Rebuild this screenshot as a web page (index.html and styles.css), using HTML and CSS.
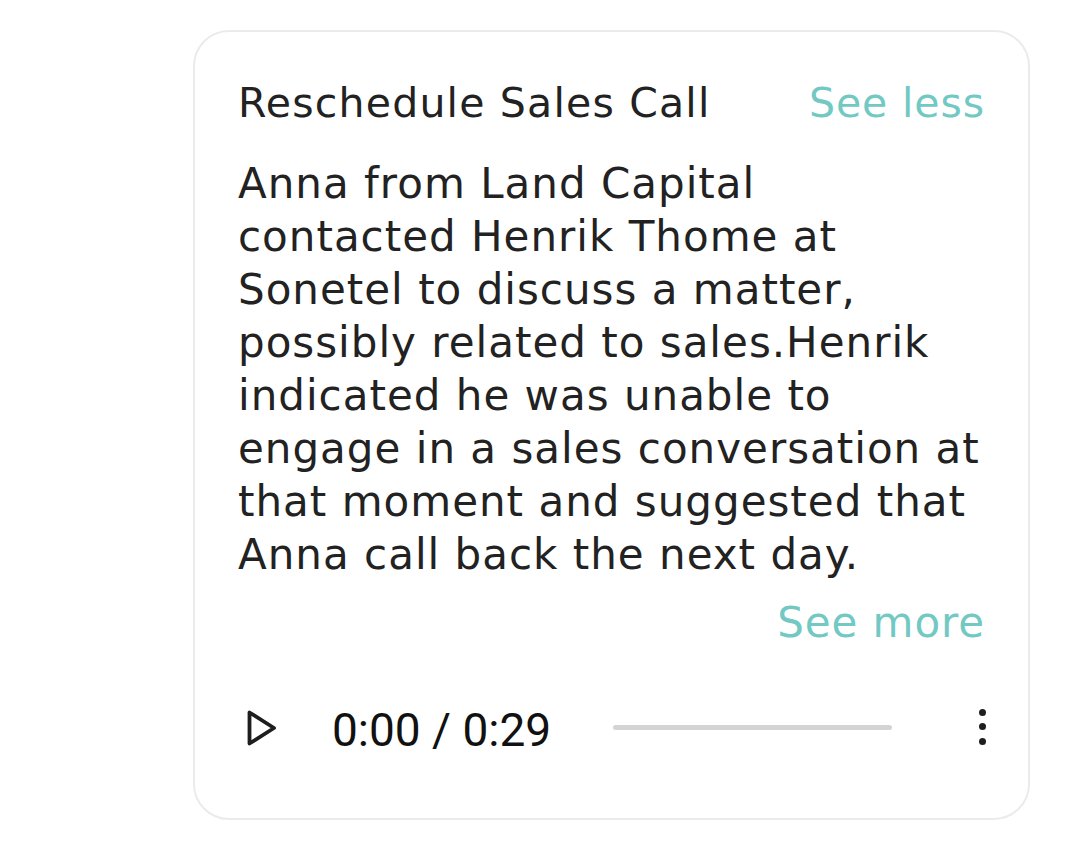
FILE: index.html
```html
<!DOCTYPE html>
<html lang="en">
<head>
<meta charset="utf-8">
<title>Reschedule Sales Call</title>
<link rel="stylesheet" href="styles.css">
</head>
<body>
<div class="card">
  <div class="card-header">
    <h2 class="title">Reschedule Sales Call</h2>
    <a class="link" href="#">See less</a>
  </div>
  <p class="summary">Anna from Land Capital contacted Henrik Thome at Sonetel to discuss a matter, possibly related to sales.Henrik indicated he was unable to engage in a sales conversation at that moment and suggested that Anna call back the next day.</p>
  <div class="more-row">
    <a class="link" href="#">See more</a>
  </div>
  <div class="player">
    <button class="play" aria-label="Play">
      <svg width="32" height="38" viewBox="0 0 32 38"><path d="M3.5 3.5 L3.5 34.5 L28 19 Z" fill="none" stroke="#1e1e1e" stroke-width="3.8" stroke-linejoin="round"/></svg>
    </button>
    <span class="time">0:00 / 0:29</span>
    <div class="track"></div>
    <div class="menu" aria-label="More options">
      <span class="dot"></span><span class="dot"></span><span class="dot"></span>
    </div>
  </div>
</div>
</body>
</html>
```
FILE: styles.css
```css
html, body {
  margin: 0;
  padding: 0;
  background: #ffffff;
}
body {
  padding: 30px 50px 0 193px;
  font-family: "DejaVu Sans", sans-serif;
  color: #222222;
}
.card {
  width: 747px;
  border: 2px solid #ebebeb;
  border-radius: 36px;
  padding: 46px 43px 58px 43px;
}
.card-header {
  display: flex;
  justify-content: space-between;
  align-items: baseline;
}
.title {
  margin: 0;
  font-size: 41px;
  line-height: 50px;
  font-weight: normal;
  letter-spacing: 1.2px;
  color: #222222;
}
.link {
  font-size: 41px;
  line-height: 50px;
  letter-spacing: 0.9px;
  color: #72c9c4;
  text-decoration: none;
}
.summary {
  margin: 29px 0 0 0;
  width: 744px;
  font-size: 42px;
  line-height: 53px;
  letter-spacing: 1px;
  color: #222222;
}
.more-row {
  display: flex;
  justify-content: flex-end;
  margin-top: 15px;
}
.more-row .link {
  font-size: 42px;
  line-height: 53px;
}
.player {
  display: flex;
  align-items: center;
  height: 60px;
  margin-top: 51px;
}
.play {
  width: 50px;
  height: 60px;
  padding: 0 0 0 8px;
  border: 0;
  background: none;
  display: flex;
  align-items: center;
  justify-content: flex-start;
}
.play svg {
  display: block;
  margin-top: -5px;
}
.time {
  margin-left: 44px;
  font-family: Roboto, sans-serif;
  font-size: 46px;
  line-height: 46px;
  color: #111111;
}
.track {
  margin-left: 62px;
  width: 279px;
  height: 5px;
  border-radius: 3px;
  background: #d4d4d4;
  margin-top: -6px;
}
.menu {
  margin-left: auto;
  margin-right: -1px;
  width: 8px;
  display: flex;
  flex-direction: column;
  align-items: center;
  gap: 7.5px;
  margin-top: -7px;
}
.dot {
  width: 7px;
  height: 7px;
  border-radius: 50%;
  background: #1e1e1e;
}
```
